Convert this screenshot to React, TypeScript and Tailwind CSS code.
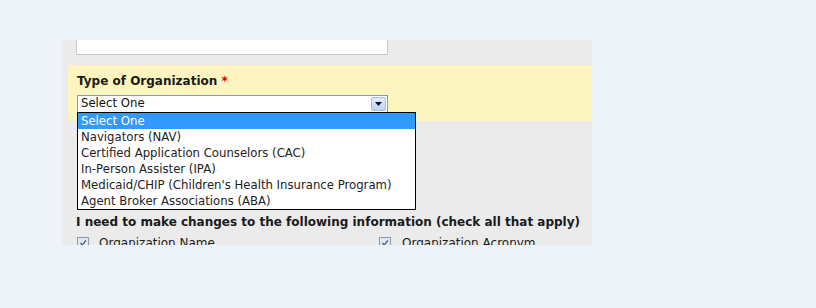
import React from 'react';

const options = [
  'Select One',
  'Navigators (NAV)',
  'Certified Application Counselors (CAC)',
  'In-Person Assister (IPA)',
  "Medicaid/CHIP (Children's Health Insurance Program)",
  'Agent Broker Associations (ABA)',
];

const Check = () => (
  <span className="inline-block w-[12px] h-[12px] border border-[#8a9bb0] bg-[#dfe7f1] relative shrink-0">
    <svg viewBox="0 0 12 12" className="absolute inset-0 w-full h-full">
      <path d="M3 6 L5 8.5 L9.5 3" stroke="#4a5a70" strokeWidth="1.5" fill="none" />
    </svg>
  </span>
);

export default function App() {
  return (
    <div className="w-[816px] h-[308px] bg-[#eef2f9] overflow-hidden pt-[40px]" style={{ fontFamily: '"DejaVu Sans", Verdana, sans-serif' }}>
      <div className="ml-[62px] w-[530px] h-[205px] bg-[#ebebeb] overflow-hidden relative">
        {/* text input, top cut off */}
        <div className="ml-[14px] w-[312px] h-[15px] bg-white border border-[#c8c8c8] border-t-0" />

        {/* highlighted field */}
        <div className="ml-[6px] mt-[10px] h-[56px] bg-[#fdf5c0] pl-[9px] pt-[9px]">
          <div className="text-[12px] font-bold text-[#1a1a1a] leading-[15px]">
            Type of Organization <span className="text-[#d40000]">*</span>
          </div>
          <div className="mt-[6px] w-[311px] h-[18px] bg-white border border-[#7f9db9] flex items-center relative">
            <span className="pl-[3px] text-[11.7px] text-[#111] leading-none">
              Select One
            </span>
            <span className="absolute right-[1px] top-[1px] w-[15px] h-[14px] rounded-[2px] border border-[#a7c0de] bg-gradient-to-b from-[#e4efff] to-[#bcd4f6] flex items-center justify-center">
              <svg viewBox="0 0 7 4" className="w-[7px] h-[4px]">
                <path d="M0 0 H7 L3.5 4 Z" fill="#111" />
              </svg>
            </span>
          </div>
        </div>

        {/* open dropdown list */}
        <div className="absolute left-[15px] top-[72px] w-[339px] border border-black bg-white">
          {options.map((o, i) => (
            <div
              key={o}
              className={`h-[16px] pl-[3px] text-[11.7px] leading-[16px] whitespace-nowrap ${i === 0 ? 'bg-[#3399ff] text-white' : 'text-[#222]'}`}
            >
              {o}
            </div>
          ))}
        </div>

        <div className="mt-[94px] ml-[14px] text-[12px] font-bold text-[#1a1a1a] leading-[15px] whitespace-nowrap">
          I need to make changes to the following information (check all that apply)
        </div>
        <div className="ml-[15px] mt-[7px] flex text-[12px] text-[#1a1a1a] leading-[14px]">
          <div className="w-[302px] flex items-start gap-[10px]">
            <Check />
            <span className="-mt-[1px]">Organization Name</span>
          </div>
          <div className="flex items-start gap-[11px]">
            <Check />
            <span className="-mt-[1px]">Organization Acronym</span>
          </div>
        </div>
      </div>
    </div>
  );
}
